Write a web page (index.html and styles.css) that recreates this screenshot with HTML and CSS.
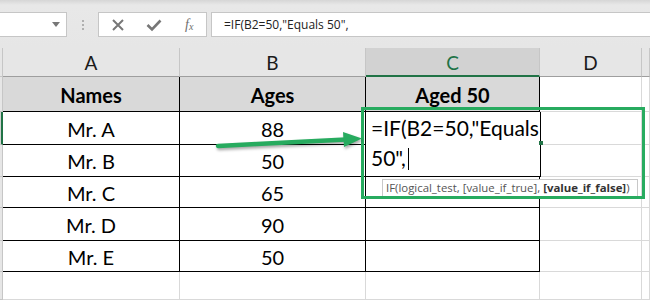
FILE: index.html
```html
<!DOCTYPE html>
<html lang="en">
<head>
    <meta charset="UTF-8">
    <title>IF formula</title>
    <link rel="stylesheet" href="styles.css">
</head>
<body>
    <div class="toolbar">
        <div class="namebox"><span class="caret"></span></div>
        <div class="grip"><i></i><i></i><i></i></div>
        <div class="fxbox">
            <svg width="14" height="14" viewBox="0 0 14 14"><path d="M2 2 L12 12 M12 2 L2 12" stroke="#777" stroke-width="2" fill="none"/></svg>
            <svg width="16" height="14" viewBox="0 0 16 14"><path d="M1.5 7 L6 11.5 L14.5 2.5" stroke="#777" stroke-width="2.6" fill="none"/></svg>
            <span class="fx">f<sub>x</sub></span>
        </div>
        <div class="formula">=IF(B2=50,"Equals 50",</div>
    </div>

    <div class="sheet">
        <div class="rh"></div>
        <div class="ch">A</div>
        <div class="ch">B</div>
        <div class="ch sel">C</div>
        <div class="ch">D</div>
        <div class="ch"></div>

        <div class="rh"></div>
        <div class="c t head">Names</div>
        <div class="c t head">Ages</div>
        <div class="c t head">Aged 50</div>
        <div class="c"></div>
        <div class="c"></div>

        <div class="rh active"></div>
        <div class="c t">Mr. A</div>
        <div class="c t">88</div>
        <div class="c t"></div>
        <div class="c"></div>
        <div class="c"></div>

        <div class="rh"></div>
        <div class="c t">Mr. B</div>
        <div class="c t">50</div>
        <div class="c t"></div>
        <div class="c"></div>
        <div class="c"></div>

        <div class="rh"></div>
        <div class="c t">Mr. C</div>
        <div class="c t">65</div>
        <div class="c t"></div>
        <div class="c"></div>
        <div class="c"></div>

        <div class="rh"></div>
        <div class="c t">Mr. D</div>
        <div class="c t">90</div>
        <div class="c t"></div>
        <div class="c"></div>
        <div class="c"></div>

        <div class="rh"></div>
        <div class="c t">Mr. E</div>
        <div class="c t">50</div>
        <div class="c t"></div>
        <div class="c"></div>
        <div class="c"></div>

        <div class="rh"></div>
        <div class="c"></div>
        <div class="c"></div>
        <div class="c"></div>
        <div class="c"></div>
        <div class="c"></div>
    </div>

    <!-- cell being edited, spills over C3 -->
    <div class="editor">=IF(B2=50,"Equals<br>50",<span class="cursor"></span><span class="handle"></span></div>
    <div class="tip">IF(logical_test, [value_if_true], <b>[value_if_false]</b>)</div>
    <div class="mark"></div>
    <svg class="arrow" width="650" height="300" viewBox="0 0 650 300">
        <line x1="218" y1="146" x2="346" y2="139.5" stroke="#27ab5f" stroke-width="4.5" stroke-linecap="round"/>
        <polygon points="343,132 362,138.5 344,147" fill="#27ab5f"/>
    </svg>
</body>
</html>
```

FILE: styles.css
```css
* {
    box-sizing: border-box;
}

body {
    margin: 0;
    width: 650px;
    height: 300px;
    overflow: hidden;
    position: relative;
    background: #fff;
    font-family: Lato, "Open Sans", sans-serif;
}

.toolbar {
    height: 48px;
    background: linear-gradient(#d6d6d6 0, #e8e8e8 5px, #e6e6e6 100%);
    display: flex;
    align-items: center;
    padding-top: 1px;
}

.namebox {
    width: 67px;
    height: 25px;
    background: #fff;
    border: 1px solid #c6c6c6;
    border-left: none;
    position: relative;
}

.caret {
    position: absolute;
    right: 6px;
    top: 9px;
    border-left: 4px solid transparent;
    border-right: 4px solid transparent;
    border-top: 5px solid #777;
}

.grip {
    width: 31px;
    display: flex;
    flex-direction: column;
    align-items: center;
    gap: 2px;
}

.grip i {
    width: 2px;
    height: 2px;
    background: #b0b0b0;
}

.fxbox {
    width: 109px;
    height: 25px;
    background: #fff;
    border: 1px solid #c6c6c6;
    display: flex;
    align-items: center;
    padding-left: 12px;
    gap: 21px;
}

.fx {
    font-family: "Liberation Serif", serif;
    font-style: italic;
    font-size: 14px;
    color: #6f6f6f;
    margin-left: 2px;
}

.fx sub {
    font-size: 10px;
    vertical-align: -1px;
}

.formula {
    flex: 1;
    margin-left: 4px;
    height: 25px;
    background: #fff;
    border: 1px solid #c6c6c6;
    border-right: none;
    font-family: "Open Sans", sans-serif;
    font-size: 12px;
    line-height: 23px;
    padding-left: 12px;
    color: #222;
}

.sheet {
    display: grid;
    grid-template-columns: 3px 177px 186px 174px 102px 1fr;
    grid-template-rows: 29px 35px 33px 32px 31px 33px 31px 1fr;
    height: 252px;
}

.rh {
    background: #e6e6e6;
    border-right: 1px solid #c6c6c6;
    border-bottom: 1px solid #c6c6c6;
}

.rh.active {
    background: #d2d2d2;
    border-right: 2px solid #217346;
}

.ch {
    background: #e6e6e6;
    border-right: 1px solid #c6c6c6;
    border-bottom: 1px solid #9e9e9e;
    text-align: center;
    font-size: 19px;
    line-height: 30px;
    color: #1a1a1a;
}

.ch.sel {
    background: #d2d2d2;
    color: #217346;
    border-bottom: 2px solid #217346;
}

.c {
    border-right: 1px solid #d9d9d9;
    border-bottom: 1px solid #d9d9d9;
    text-align: center;
    font-size: 20px;
    color: #000;
    display: flex;
    align-items: center;
    justify-content: center;
    padding-top: 1px;
}

.c.t {
    border-right: 1.5px solid #000;
    border-bottom: 1.5px solid #000;
}

.c.head {
    background: #d9d9d9;
    font-weight: bold;
}

.editor {
    position: absolute;
    left: 366px;
    top: 112px;
    width: 175px;
    height: 65px;
    background: #fff;
    border-right: 1.5px solid #000;
    border-bottom: 1.5px solid #000;
    font-size: 21px;
    line-height: 30px;
    padding: 1px 0 0 5px;
    color: #000;
}

.cursor {
    display: inline-block;
    width: 1px;
    height: 22px;
    background: #000;
    vertical-align: -4px;
    margin-left: 2px;
}

.handle {
    position: absolute;
    right: -3px;
    top: 29px;
    width: 4px;
    height: 4px;
    background: #217346;
}

.tip {
    position: absolute;
    left: 382px;
    top: 179px;
    width: 256px;
    height: 18px;
    background: #fff;
    border: 1px solid #c8c8c8;
    font-family: "Open Sans", sans-serif;
    font-size: 11.4px;
    line-height: 16px;
    padding-left: 3px;
    color: #555;
    white-space: nowrap;
}

.tip b {
    color: #333;
}

.mark {
    position: absolute;
    left: 361px;
    top: 107px;
    width: 284px;
    height: 92px;
    border: 3px solid #27ab5f;
}

.arrow {
    position: absolute;
    left: 0;
    top: 0;
    filter: drop-shadow(1px 2px 1.5px rgba(0, 0, 0, 0.35));
}
```
